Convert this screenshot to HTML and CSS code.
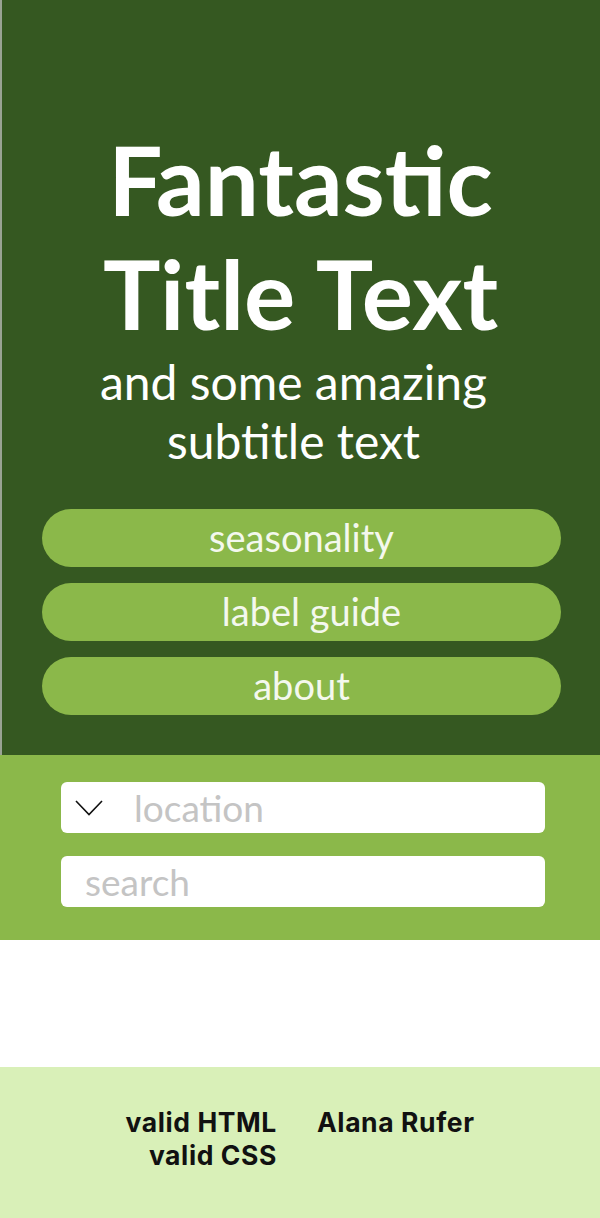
FILE: index.html
```html
<!DOCTYPE html>
<html lang="en">
<head>
<meta charset="utf-8">
<title>Fantastic Title Text</title>
<link rel="stylesheet" href="styles.css">
</head>
<body>
<header class="hero">
  <h1 class="title">Fantastic<br>Title Text</h1>
  <p class="subtitle">and some amazing<br>subtitle text</p>
  <nav class="nav">
    <a class="nav-btn" href="#">seasonality</a>
    <a class="nav-btn nav-btn-shift" href="#">label guide</a>
    <a class="nav-btn" href="#">about</a>
  </nav>
</header>
<section class="filters">
  <div class="field">
    <svg class="chevron" viewBox="0 0 28 16" width="28" height="16" aria-hidden="true"><path d="M1 1 L14 14.5 L27 1" fill="none" stroke="#111" stroke-width="1.6"/></svg>
    <span class="placeholder loc">location</span>
  </div>
  <div class="field">
    <span class="placeholder">search</span>
  </div>
</section>
<main class="content"></main>
<footer class="footer">
  <div class="foot-col foot-left">valid HTML<br>valid CSS</div>
  <div class="foot-col">Alana Rufer</div>
</footer>
</body>
</html>
```
FILE: styles.css
```css
html, body {
  margin: 0;
  padding: 0;
  background: #ffffff;
}
body {
  font-family: "Lato", "Open Sans", sans-serif;
}
.hero {
  background: #355821;
  padding: 122px 39px 40px 40px;
  margin-left: 2px;
  box-shadow: -2px 0 0 #9aa394;
}
.title {
  margin: 0;
  text-align: center;
  color: #ffffff;
  font-weight: 700;
  font-size: 96px;
  line-height: 114px;
  padding-right: 2px;
}
.subtitle {
  margin: 2px 0 0;
  text-align: center;
  color: #ffffff;
  font-weight: 400;
  font-size: 48px;
  line-height: 59px;
  padding-right: 16px;
}
.nav {
  margin-top: 39px;
  display: flex;
  flex-direction: column;
  gap: 16px;
}
.nav-btn {
  display: block;
  height: 58px;
  line-height: 56px;
  border-radius: 29px;
  background: #8bb84a;
  color: #f4f8ee;
  text-align: center;
  text-decoration: none;
  font-size: 38px;
}
.nav-btn-shift {
  padding-left: 20px;
}
.filters {
  background: #8bb84a;
  padding: 27px 55px 33px 61px;
  display: flex;
  flex-direction: column;
  gap: 23px;
}
.field {
  height: 51px;
  background: #ffffff;
  border-radius: 6px;
  display: flex;
  align-items: center;
  padding-left: 24px;
}
.chevron {
  margin-left: -10px;
  margin-right: 31px;
  flex: none;
}
.placeholder {
  color: #c4c4c4;
  font-size: 37px;
  line-height: 51px;
}
.content {
  height: 127px;
}
.footer {
  background: #d9f0b8;
  height: 151px;
  box-sizing: border-box;
  padding-top: 39px;
  display: flex;
  justify-content: center;
  gap: 40px;
  font-family: "Inter", "Roboto", sans-serif;
  font-weight: 700;
  font-size: 26.5px;
  line-height: 33px;
  color: #111111;
  letter-spacing: 0.6px;
}
.foot-left {
  text-align: right;
}
```
